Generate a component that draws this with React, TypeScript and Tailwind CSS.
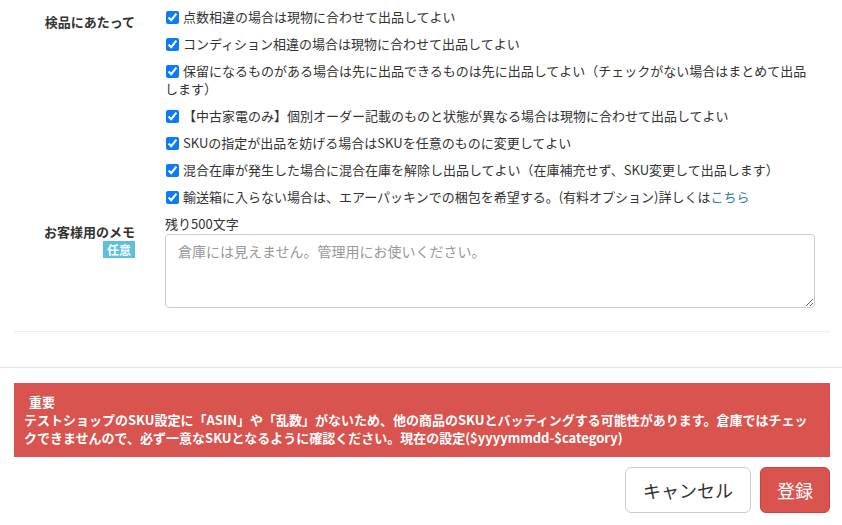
const checks: Array<React.ReactNode> = [
  "点数相違の場合は現物に合わせて出品してよい",
  "コンディション相違の場合は現物に合わせて出品してよい",
  <>
    保留になるものがある場合は先に出品できるものは先に出品してよい（チェックがない場合はまとめて出品
    <br />
    します）
  </>,
  "【中古家電のみ】個別オーダー記載のものと状態が異なる場合は現物に合わせて出品してよい",
  "SKUの指定が出品を妨げる場合はSKUを任意のものに変更してよい",
  "混合在庫が発生した場合に混合在庫を解除し出品してよい（在庫補充せず、SKU変更して出品します）",
  <>
    輸送箱に入らない場合は、エアーパッキンでの梱包を希望する。(有料オプション)詳しくは
    <a href="#" className="text-[#337ab7]">
      こちら
    </a>
  </>,
];

export default function App() {
  return (
    <div className="w-[842px] h-[525px] bg-white text-[#333] text-[13px] leading-[18px] font-['Noto_Sans_CJK_JP',sans-serif] overflow-hidden">
      {/* modal body */}
      <div className="pl-[14px] pr-[12px] pt-[8px]">
        <div className="grid grid-cols-[136px_1fr]">
          <div className="pr-[15px] pt-[5px] text-right font-bold">検品にあたって</div>
          <div className="pl-[15px] flex flex-col gap-[9px]">
            {checks.map((c, i) => (
              <label key={i} className="whitespace-nowrap">
                <input
                  type="checkbox"
                  defaultChecked
                  className="m-0 ml-[1px] mr-[4px] w-[13px] h-[13px] align-[-2px] accent-[#0a7cf7]"
                />
                {c}
              </label>
            ))}
          </div>
        </div>

        <div className="grid grid-cols-[136px_1fr] mt-[9px]">
          <div className="pr-[15px] pt-[8px] flex flex-col items-end">
            <span className="font-bold">お客様用のメモ</span>
            <span className="bg-[#5bc0de] text-white font-bold text-[12px] leading-[17px] px-[4px]">任意</span>
          </div>
          <div className="pl-[15px] pr-[15px]">
            <div>残り500文字</div>
            <textarea
              placeholder="倉庫には見えません。管理用にお使いください。"
              className="block w-full h-[74px] mt-[1px] border border-[#ccc] rounded-[4px] px-[12px] py-[6px] text-[14px] leading-[20px] placeholder:text-[#999] outline-none"
            />
          </div>
        </div>

        <hr className="mt-[23px] border-0 border-t border-[#eee]" />
      </div>

      {/* modal footer */}
      <div className="mt-[35px] border-t border-[#e5e5e5] pl-[14px] pr-[12px] pt-[15px]">
        <div className="bg-[#d9534f] text-white font-bold p-[10px] whitespace-nowrap">
          <div className="pl-[5px]">重要</div>
          <div>
            テストショップのSKU設定に「ASIN」や「乱数」がないため、他の商品のSKUとバッティングする可能性があります。倉庫ではチェッ
          </div>
          <div>クできませんので、必ず一意なSKUとなるように確認ください。現在の設定($yyyymmdd-$category)</div>
        </div>
        <div className="flex justify-end gap-[9px] mt-[10px]">
          <button className="h-[46px] px-[17px] text-[18px] border border-[#ccc] rounded-[6px] bg-white text-[#333]">
            キャンセル
          </button>
          <button className="h-[46px] px-[16px] text-[18px] border border-[#d43f3a] rounded-[6px] bg-[#d9534f] text-white">
            登録
          </button>
        </div>
      </div>
    </div>
  );
}
